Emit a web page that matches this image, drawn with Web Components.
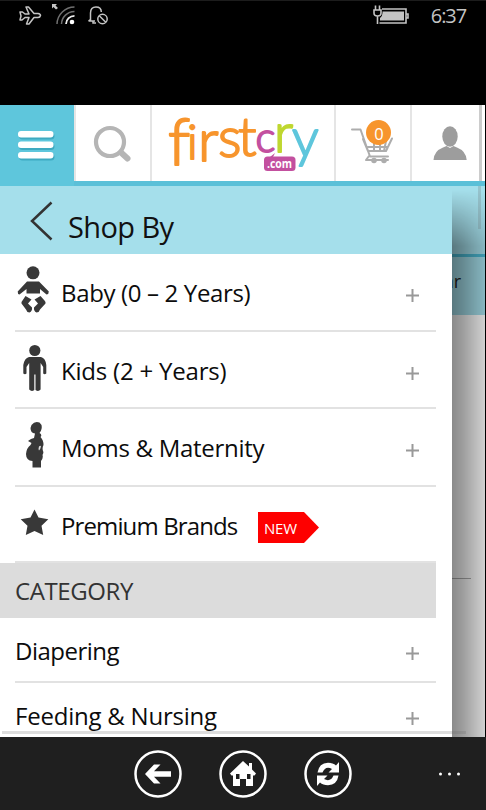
<!DOCTYPE html>
<html lang="en">
<head>
<meta charset="utf-8">
<title>FirstCry</title>
<style>
  body {
    margin: 0;
    background: #000;
    font-family: "Open Sans", "Noto Sans", sans-serif;
  }
</style>
</head>
<body>
<fc-phone>
  <fc-status-bar slot="status" time="6:37"></fc-status-bar>
  <fc-header slot="header" count="0"></fc-header>
  <fc-backdrop slot="page">ar</fc-backdrop>
  <fc-drawer slot="drawer" heading="Shop By">
    <fc-item icon="baby" style="--h: 78px; --ls: -0.35px">Baby (0 – 2 Years)</fc-item>
    <fc-item icon="kid" style="--h: 77px; --ls: -0.2px">Kids (2 + Years)</fc-item>
    <fc-item icon="mom" style="--h: 78px; --ls: -0.28px">Moms &amp; Maternity</fc-item>
    <fc-item icon="star" badge="NEW" style="--h: 76px; --ls: -0.88px">Premium Brands</fc-item>
    <fc-section>CATEGORY</fc-section>
    <fc-item style="--h: 65px; --top: 18px; --ls: -0.5px">Diapering</fc-item>
    <fc-item style="--h: 65px; --top: 18px; --ls: -0.22px">Feeding &amp; Nursing</fc-item>
  </fc-drawer>
  <fc-app-bar slot="bar"></fc-app-bar>
</fc-phone>

<script>
const ICONS = {
  baby: `<svg width="34" height="48" viewBox="0 0 34 48" fill="#383838">
    <circle cx="16" cy="6.800" r="6.500"/>
    <path d="M10 15.500H22L31.800 25.500Q32 28 29.500 28.500L23 23V27.500H9.500V23L2.500 28.500Q.5 28 .7 25.500Z"/>
    <path d="M8.500 30L14.500 33.500L11 37.500L15 41.500Q15.500 45 12.500 46.500Q9.500 46 9 43.500L4.500 37.500Q4 36 5.500 34.500ZM23.500 30L17.500 33.500L21 37.500L17 41.500Q16.500 45 19.500 46.500Q22.500 46 23 43.500L28.500 37.500Q29 36 27.500 34.500Z"/>
  </svg>`,
  kid: `<svg width="34" height="48" viewBox="0 0 34 48" fill="#383838">
    <circle cx="17.800" cy="6.500" r="5.600"/>
    <path d="M12 13H24Q28.500 14 29.300 21V29.500Q27.500 31 26.200 29.500V23L23.600 19V45.500Q21.500 48 18.500 46V30.500H17.300V46Q14.500 48 12.200 45.500V19L9.500 23V29.500Q8 31 6.300 29.500V21Q7.500 14 12 13Z"/>
  </svg>`,
  mom: `<svg width="34" height="48" viewBox="0 0 34 48" fill="#383838">
    <path d="M14.500 4Q18-.5 22.500 1.500Q25.500 4 24.500 8Q24 10.500 22.500 12Q25.500 13.500 23.500 16Q26.500 19 26.500 24Q25 27 26 30Q27 31.500 25.500 34Q26.500 37 24 40V46.500H15.500V40Q9 39.500 9 33Q9.500 27 13.500 24L14.500 22L11 20Q14 17.500 17 17L18 12.500Q13.500 12 13.500 7Z"/>
    <path d="M22 25.500Q23.500 24 24 25.500Q23.500 28 22 29.500Q21.200 27.500 22 25.500Z" fill="#ddd"/>
  </svg>`,
  star: `<svg width="34" height="48" viewBox="0 0 34 48" fill="#383838">
    <path d="M17.500 10.500L21.500 18.500L31.300 20.200L24.500 26.800L26.200 36L17.500 32L8.800 36L10.500 26.800L3.700 20.200L13.500 18.500Z"/>
  </svg>`
};

class FcPhone extends HTMLElement {
  constructor() {
    super();
    this.attachShadow({ mode: 'open' }).innerHTML = `
      <style>
        :host {
          display: flex;
          flex-direction: column;
          width: 486px;
          height: 810px;
          background: #000;
          overflow: hidden;
        }
        .stage {
          display: grid;
          grid-template: 551px / 485px;
          height: 551px;
          overflow: hidden;
        }
        .stage > div {
          grid-area: 1 / 1;
          min-height: 0;
        }
        .page { z-index: 0; }
        .drawer { z-index: 1; width: 452px; }
        .bars {
          position: relative;
          z-index: 2;
        }
        .bars i {
          position: absolute;
          background: rgba(100, 100, 100, .22);
        }
        .v { right: 4px; top: 0; width: 3px; height: 43px; }
        .h { left: 2px; bottom: 3px; width: 464px; height: 3px; }
      </style>
      <slot name="status"></slot>
      <slot name="header"></slot>
      <div class="stage">
        <div class="page"><slot name="page"></slot></div>
        <div class="drawer"><slot name="drawer"></slot></div>
        <div class="bars"><i class="v"></i><i class="h"></i></div>
      </div>
      <slot name="bar"></slot>
    `;
  }
}

class FcStatusBar extends HTMLElement {
  connectedCallback() {
    this.attachShadow({ mode: 'open' }).innerHTML = `
      <style>
        :host {
          display: flex;
          align-items: flex-start;
          box-sizing: border-box;
          height: 105px;
          padding: 3px 20px 0 18px;
          border-top: 1px solid #1c1c1c;
          background: #000;
          color: #c4c4c4;
        }
        svg { display: block; }
        .right { margin-left: auto; }
        time {
          margin-left: 22px;
          font: 20px/24px "Open Sans", sans-serif;
          letter-spacing: -1.1px;
        }
      </style>
      <svg width="92" height="24" viewBox="18 4 92 24" fill="none" stroke="#c4c4c4" stroke-width="1.500">
        <path d="M20 12H22.500L25 14H29L26 7H28.500L34 13.500H38Q40.500 13.800 40.500 15.500Q40 17.500 38 17.500H34L29 24H26.500L29 17.500H25L22 20H20L21 16Z" stroke-linejoin="round"/>
        <path d="M52 4H57L55.500 5.500L58 8L56 9.500L53.500 7L52 8.500Z" fill="#c4c4c4" stroke="none"/>
        <path d="M57 24A17.500 17.500 0 0 1 74.500 7M61.500 24A13 13 0 0 1 74.500 11.500" stroke="#707070"/>
        <path d="M66 24A8.500 8.500 0 0 1 74.500 15.800" stroke="#eee" stroke-width="1.800"/>
        <circle cx="72" cy="22" r="2.300" fill="#fff" stroke="none"/>
        <path d="M88.500 21H95M90.500 20.500V13Q90.500 7 96 7Q101.300 7 101.300 12M88.500 21L91 19M93 21V23H96"/>
        <circle cx="102.500" cy="19" r="4.700"/>
        <path d="M99.300 15.800L105.800 22.200"/>
      </svg>
      <svg class="right" width="36" height="24" viewBox="373 4 36 24" fill="none" stroke="#c4c4c4" stroke-width="1.600">
        <path d="M375.500 5.500V10M379.500 5.500V10M374 10H381V13Q381 16 377.500 16Q374 16 374 13ZM377.500 16V24"/>
        <path d="M382 9H406V23H379.500M406 14H408V18H406"/>
        <path d="M382.500 11.500H404V20.500H380V18Q382.500 16 382.500 13Z" fill="#c4c4c4" stroke="none"/>
      </svg>
      <time>${this.getAttribute('time')}</time>
    `;
  }
}

class FcHeader extends HTMLElement {
  connectedCallback() {
    this.attachShadow({ mode: 'open' }).innerHTML = `
      <style>
        :host {
          display: grid;
          grid-template-columns: 74px 78px 184px 76px 73px;
          box-sizing: border-box;
          width: 485px;
          height: 81px;
          border-bottom: 5px solid #5bc0d8;
          background: #fff;
        }
        .cell {
          box-sizing: border-box;
          height: 76px;
          border-right: 2px solid #e5e5e5;
        }
        .menu { height: 81px; background: #5ec6dc; border: 0; }
        .search { border-left: 2px solid #e5e5e5; }
        .user { border-right: 0; background: linear-gradient(90deg, #fff 67px, #ccc 67px 70px, #fff 70px); }
        svg { display: block; overflow: visible; }
        .logo { font-family: "Lato", sans-serif; }
      </style>
      <div class="cell menu">
        <svg width="74" height="76" viewBox="0 105 74 76">
          <g fill="#2d9cb3" opacity=".65">
            <rect x="19" y="132.500" width="35.500" height="7" rx="3.500"/>
            <rect x="19" y="143" width="35.500" height="7" rx="3.500"/>
            <rect x="19" y="153.500" width="35.500" height="7" rx="3.500"/>
          </g>
          <g fill="#fff">
            <rect x="18" y="131" width="35.500" height="6.500" rx="3"/>
            <rect x="18" y="141.500" width="35.500" height="6.500" rx="3"/>
            <rect x="18" y="152" width="35.500" height="6.500" rx="3"/>
          </g>
        </svg>
      </div>
      <div class="cell search">
        <svg width="74" height="76" viewBox="76 105 74 76" fill="none" stroke="#b5b5b5">
          <circle cx="110" cy="142" r="14" stroke-width="4.200"/>
          <path d="M121 152.500L127.500 158.500" stroke-width="6" stroke-linecap="round"/>
        </svg>
      </div>
      <div class="cell">
        <svg class="logo" width="182" height="76" viewBox="152 105 182 76">
          <text fill="#f7952d" stroke="#f7952d" stroke-width="1.900" stroke-linejoin="round" font-weight="300"><tspan x="168" y="165" font-size="65">f</tspan><tspan x="187" y="159" font-size="48">i</tspan><tspan x="198" y="161" font-size="58">r</tspan><tspan x="218" y="157" font-size="55">s</tspan><tspan x="238" y="156" font-size="54">t</tspan><tspan x="255.500" y="152" font-size="42" fill="#c3509f" stroke="#c3509f">c</tspan><tspan x="274" y="152" font-size="54" fill="#bfd730" stroke="#bfd730">r</tspan><tspan x="292" y="157" font-size="53" fill="#5ec6dc" stroke="#5ec6dc">y</tspan></text>
          <path d="M270 157L275 153L273 157Z" fill="#c3509f"/>
          <rect x="264" y="156.500" width="31.500" height="14.500" rx="3.500" fill="#c3509f"/>
          <text x="267" y="168" font-family="Open Sans" font-size="13" font-weight="700" fill="#fff" textLength="25" lengthAdjust="spacingAndGlyphs">.com</text>
        </svg>
      </div>
      <div class="cell">
        <svg width="74" height="76" viewBox="336 105 74 76">
          <path d="M352 129.500H360.500L370 156.500H388M363 139L368 151H386L392 138.500M368 147H388M374 141V150M380 141V150M386 141L384 151M369 156L366 160H388" fill="none" stroke="#adadad" stroke-width="2" stroke-linecap="round" stroke-linejoin="round"/>
          <circle cx="374" cy="160.500" r="2.800" fill="#adadad"/>
          <circle cx="384" cy="160.500" r="2.800" fill="#adadad"/>
          <circle cx="378.500" cy="132.500" r="12.500" fill="#f7952d"/>
          <text x="379" y="139.500" font-family="Open Sans" font-size="16.500" fill="#fff" text-anchor="middle">${this.getAttribute('count')}</text>
        </svg>
      </div>
      <div class="cell user">
        <svg width="67" height="76" viewBox="412 105 67 76" fill="#9d9d9d">
          <ellipse cx="450" cy="136.500" rx="7.700" ry="10.200"/>
          <path d="M433.500 160Q434 151 443 147.500L446.500 146L450 148L453.500 146L457 147.500Q466 151 466.700 160Z"/>
        </svg>
      </div>
    `;
  }
}

// The page left dimmed behind the open drawer
class FcBackdrop extends HTMLElement {
  constructor() {
    super();
    this.attachShadow({ mode: 'open' }).innerHTML = `
      <style>
        :host {
          display: grid;
          grid-template: 551px / 485px;
        }
        .page, .shade { grid-area: 1 / 1; }
        .page {
          display: flex;
          flex-direction: column;
          background: #fff;
        }
        .top { height: 68px; background: #a5dfeb; }
        .tab {
          box-sizing: border-box;
          height: 61px;
          padding: 12px 24px 0 0;
          border-top: 3px solid #4bb9d3;
          background: #a5dfeb;
          color: #222;
          font-size: 18px;
          line-height: 25px;
          text-align: right;
        }
        hr {
          width: 471px;
          margin: 263px 0 0;
          border: 0;
          border-top: 1px solid #b0b0b0;
        }
        .shade {
          background: linear-gradient(90deg, rgba(0, 0, 0, .46) 452px, rgba(0, 0, 0, .38) 463px, rgba(0, 0, 0, .18) 485px);
          -webkit-mask-image: linear-gradient(transparent 4px, #000 60px);
          mask-image: linear-gradient(transparent 4px, #000 60px);
        }
      </style>
      <div class="page">
        <div class="top"></div>
        <div class="tab"><slot></slot></div>
        <hr>
      </div>
      <div class="shade"></div>
    `;
  }
}

class FcDrawer extends HTMLElement {
  connectedCallback() {
    this.attachShadow({ mode: 'open' }).innerHTML = `
      <style>
        :host {
          display: block;
          width: 452px;
          height: 551px;
          background: #fff;
          overflow: hidden;
        }
        header {
          display: flex;
          box-sizing: border-box;
          height: 68px;
          padding: 14px 0 0 30px;
          background: #a5dfeb;
        }
        h1 {
          margin: 8px 0 0 15px;
          font-size: 29px;
          font-weight: 400;
          line-height: 38px;
          letter-spacing: -.6px;
          color: #111;
        }
      </style>
      <header>
        <svg width="23" height="42" viewBox="30 200 23 42" fill="none" stroke="#333" stroke-width="2.500">
          <path d="M51.500 202.500L32 221L51.500 239.500"/>
        </svg>
        <h1>${this.getAttribute('heading')}</h1>
      </header>
      <slot></slot>
    `;
  }
}

class FcItem extends HTMLElement {
  connectedCallback() {
    const icon = this.getAttribute('icon');
    const badge = this.getAttribute('badge');
    this.attachShadow({ mode: 'open' }).innerHTML = `
      <style>
        :host {
          display: flex;
          align-items: flex-start;
          box-sizing: border-box;
          width: 421px;
          height: var(--h);
          margin-left: 15px;
          padding-top: var(--top, 24px);
          border-bottom: 2px solid #e2e2e2;
          color: #0c0c0c;
        }
        svg { display: block; }
        .icon { width: 46px; margin-top: -12px; }
        .icon svg { margin-left: 2px; }
        .label {
          font-size: 24px;
          line-height: 30px;
          letter-spacing: var(--ls);
          white-space: nowrap;
        }
        .plus { margin: 11px 17px 0 auto; }
        .badge {
          width: 61px;
          height: 31px;
          margin: 1px 117px 0 auto;
          padding-left: 6px;
          box-sizing: border-box;
          background: #fe0000;
          clip-path: polygon(0 0, 46px 0, 100% 50%, 46px 100%, 0 100%);
          color: #fff;
          font-size: 15px;
          line-height: 33px;
          letter-spacing: -.2px;
        }
      </style>
      ${icon ? `<div class="icon">${ICONS[icon]}</div>` : ''}
      <div class="label"><slot></slot></div>
      ${badge ? `<div class="badge">${badge}</div>` : `
      <svg class="plus" width="13" height="13" viewBox="0 0 13 13">
        <path d="M0 6.500H13M6.500 0V13" stroke="#999" stroke-width="2"/>
      </svg>`}
    `;
  }
}

class FcSection extends HTMLElement {
  constructor() {
    super();
    this.attachShadow({ mode: 'open' }).innerHTML = `
      <style>
        :host {
          display: block;
          box-sizing: border-box;
          width: 436px;
          height: 55px;
          padding: 13px 15px 0;
          background: #dcdcdc;
          color: #333;
          font-size: 24px;
          line-height: 30px;
          letter-spacing: -.4px;
        }
      </style>
      <slot></slot>
    `;
  }
}

class FcAppBar extends HTMLElement {
  constructor() {
    super();
    this.attachShadow({ mode: 'open' }).innerHTML = `
      <style>
        :host {
          display: flex;
          align-items: center;
          gap: 37px;
          box-sizing: border-box;
          height: 73px;
          padding: 0 25px 0 134px;
          background: #1f1f1f;
        }
        svg { display: block; }
        .more { margin-left: auto; }
      </style>
      <svg width="48" height="48" viewBox="-24 -24 48 48">
        <circle r="22.500" fill="none" stroke="#fff" stroke-width="2.500"/>
        <path d="M-13 0L-4 -9.500H2.500L-4 -2.700H13V2.700H-4L2.500 9.500H-4Z" fill="#fff"/>
      </svg>
      <svg width="48" height="48" viewBox="-24 -24 48 48">
        <circle r="22.500" fill="none" stroke="#fff" stroke-width="2.500"/>
        <path d="M0 -13L6 -7.500V-11H9V-4.500L13 -.5L11.500 1.500H10V12H3V5H-3V12H-10V1.500H-11.500L-13 -.5Z" fill="#fff"/>
        <path d="M-7 0H-3.500V5H-7ZM4 0H7.500V5H4Z" fill="#1f1f1f"/>
      </svg>
      <svg width="48" height="48" viewBox="-24 -24 48 48" fill="#fff">
        <circle r="22.500" fill="none" stroke="#fff" stroke-width="2.500"/>
        <path d="M-10.500 -1.500Q-9 -11 0 -11.300Q5 -11.300 8 -8.500L11 -12V-1.500H0.500L4 -5Q-2.500 -8.500 -5.500 -1.500Z"/>
        <path d="M-10.500 -1.500Q-9 -11 0 -11.300Q5 -11.300 8 -8.500L11 -12V-1.500H0.500L4 -5Q-2.500 -8.500 -5.500 -1.500Z" transform="rotate(180)"/>
      </svg>
      <svg class="more" width="24" height="6" viewBox="0 0 24 6" fill="#fff">
        <circle cx="3.500" cy="3" r="1.500"/>
        <circle cx="12.500" cy="3" r="1.500"/>
        <circle cx="21.500" cy="3" r="1.500"/>
      </svg>
    `;
  }
}

customElements.define('fc-phone', FcPhone);
customElements.define('fc-status-bar', FcStatusBar);
customElements.define('fc-header', FcHeader);
customElements.define('fc-backdrop', FcBackdrop);
customElements.define('fc-drawer', FcDrawer);
customElements.define('fc-item', FcItem);
customElements.define('fc-section', FcSection);
customElements.define('fc-app-bar', FcAppBar);
</script>
</body>
</html>
